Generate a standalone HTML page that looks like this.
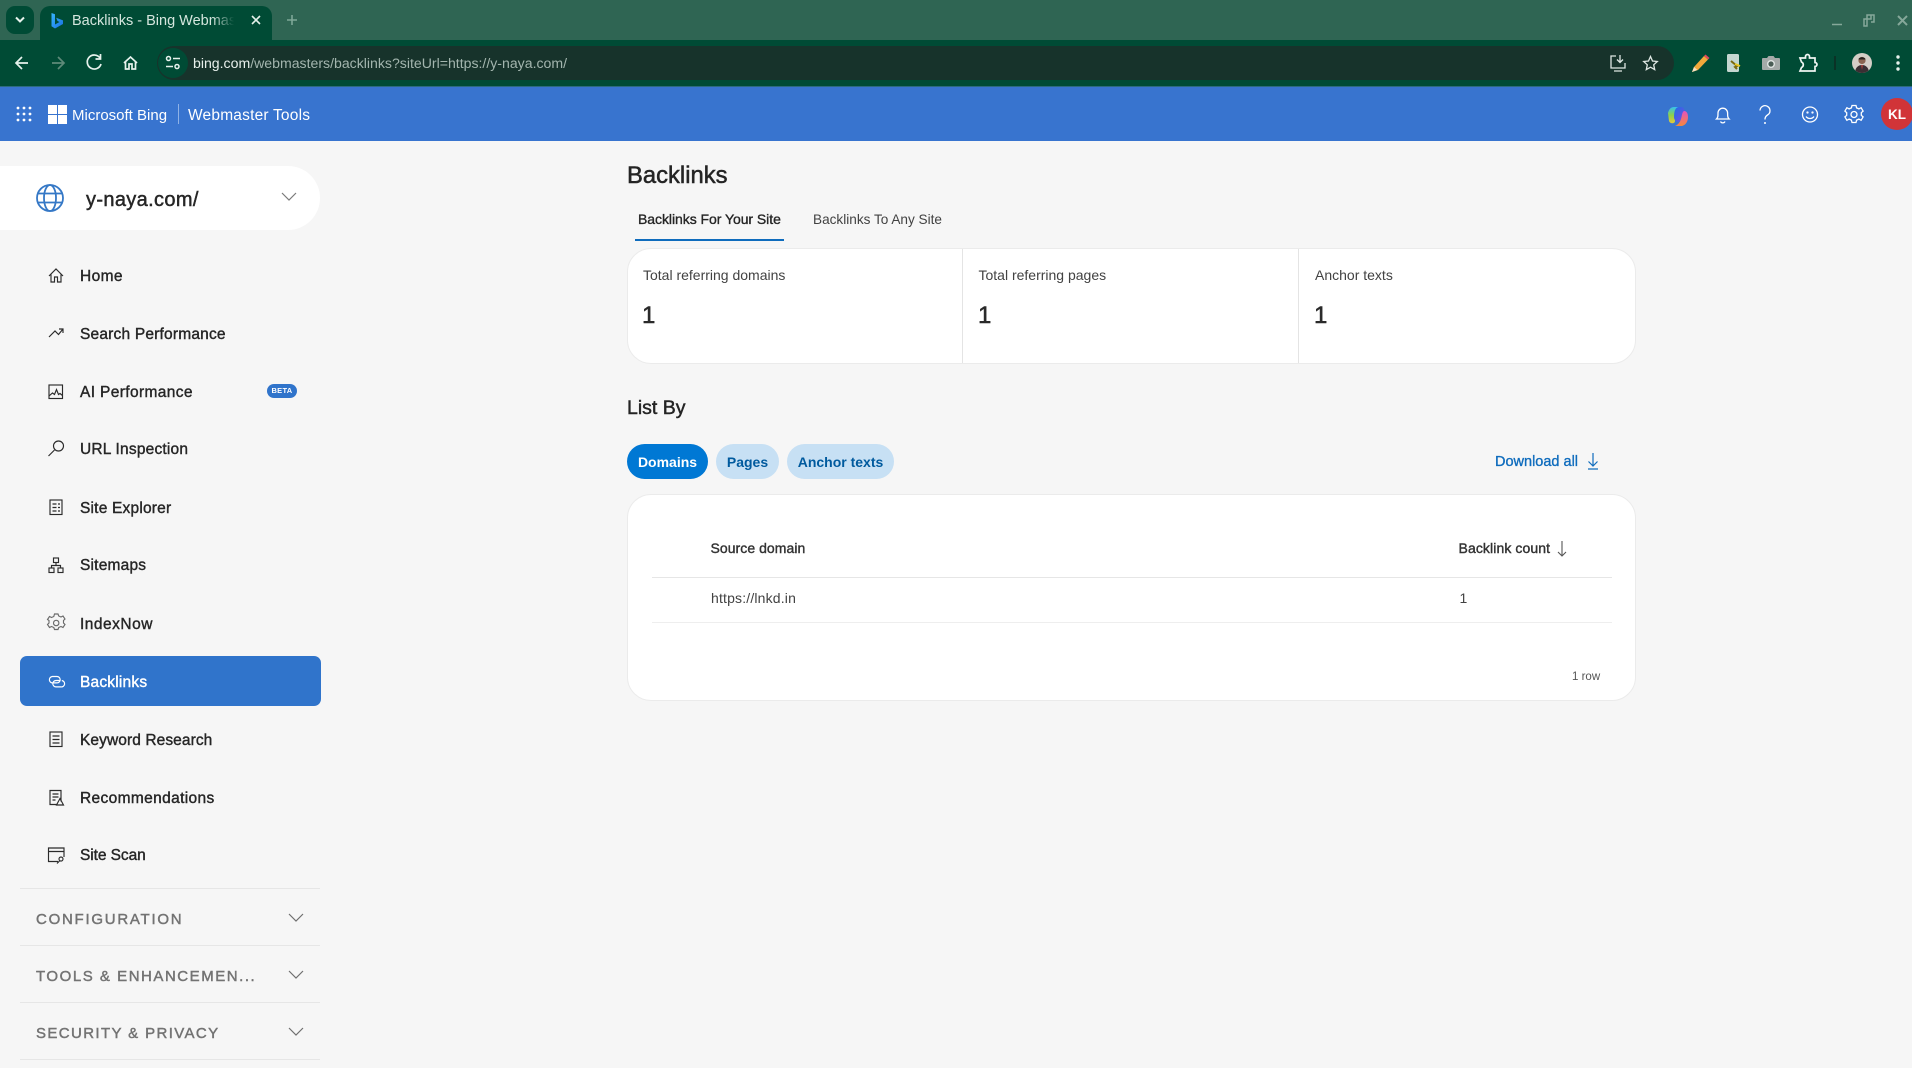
<!DOCTYPE html>
<html lang="en"><head><meta charset="utf-8"><title>Backlinks - Bing Webmaster Tools</title>
<style>
html,body{margin:0;padding:0;width:1912px;height:1068px;overflow:hidden;background:#f6f6f6;font-family:"Liberation Sans",sans-serif;color:#242424}
.a{position:absolute}
.t{position:absolute;white-space:nowrap;line-height:20px;height:20px}
svg{position:absolute;overflow:visible;fill:none}
.nav{font-size:15.5px;color:#262626;left:80px;-webkit-text-stroke:.4px #262626;letter-spacing:.2px}
.sec{font-size:15px;color:#737373;left:36px;letter-spacing:1.65px;-webkit-text-stroke:.45px #737373}
.div{position:absolute;left:20px;width:300px;height:1px;background:#e6e6e6}
.card{position:absolute;background:#fff;border:1px solid #ebebeb;border-radius:24px;box-sizing:border-box}
.pill{position:absolute;top:444px;height:35px;border-radius:17.5px;background:#c7e0f4;color:#005a9e;font-size:14px;font-weight:bold;line-height:37px;text-align:center}
</style></head><body>

<!-- browser chrome -->
<div class="a" style="left:0;top:0;width:1912px;height:40px;background:#2f6553"></div>
<div class="a" style="left:0;top:40px;width:1912px;height:46px;background:#004b35"></div>
<div class="a" style="left:0;top:86px;width:1912px;height:1px;background:#2d6a7e"></div>
<div class="a" style="left:6px;top:6px;width:28px;height:28px;border-radius:9px;background:#004b35"></div>
<svg style="left:0;top:0" width="60" height="40"><path d="M16 17.500l4 4 4-4" stroke="#e6f2ec" stroke-width="2"/></svg>
<div class="a" style="left:40px;top:6px;width:232px;height:34px;background:#004b35;border-radius:10px 10px 0 0"></div>
<svg style="left:50px;top:12px" width="14" height="18"><defs><linearGradient id="bf" x1="0" y1="0" x2="1" y2="1"><stop offset="0" stop-color="#37b6ff"/><stop offset="1" stop-color="#1a6fe0"/></linearGradient></defs><path d="M1.500 1l3.500 1.200v10.300l4.500-2.500-2-1-1.300-3.200 6.800 2.600v3.600L5 16.500l-3.500-2.200z" fill="url(#bf)"/></svg>
<div class="t" style="left:72px;top:10.500px;font-size:14.5px;color:#d5e6de;width:165px;overflow:hidden">Backlinks - Bing Webmas</div>
<div class="a" style="left:212px;top:8px;width:26px;height:28px;background:linear-gradient(90deg,rgba(0,75,53,0),#004b35 85%)"></div>
<svg style="left:250px;top:14px" width="12" height="12"><path d="M2 2l8 8M10 2l-8 8" stroke="#e6f2ec" stroke-width="1.600"/></svg>
<svg style="left:286px;top:14px" width="12" height="12"><path d="M6 1v10M1 6h10" stroke="#7fa898" stroke-width="1.600"/></svg>
<svg style="left:1825px;top:10px" width="85" height="20"><path d="M7 14.500h10" stroke="#86a89a" stroke-width="1.500"/><path d="M39 9h7v-4h-4v11h-3zM42 5h7v7h-3" stroke="#86a89a" stroke-width="1.500"/><path d="M73 6l9 9M82 6l-9 9" stroke="#86a89a" stroke-width="2"/></svg>

<svg style="left:0;top:40px" width="160" height="46"><g stroke="#e6f2ec" stroke-width="1.700"><path d="M28 23H17M22 17l-6 6 6 6"/><path d="M52 23h11M58 17l6 6-6 6" stroke="#5e8a79"/><path d="M100 18a7 7 0 1 0 1 6M100.500 14v5h-5"/><path d="M124 23l6.500-6 6.500 6M125.500 22v7h3.500v-5h3v5h3.500v-7"/></g></svg>
<div class="a" style="left:157px;top:46px;width:1517px;height:34px;border-radius:17px;background:#17332b"></div>
<div class="a" style="left:158px;top:48px;width:30px;height:30px;border-radius:15px;background:#004b35"></div>
<svg style="left:164px;top:55px" width="18" height="16"><g stroke="#e6f2ec" stroke-width="1.500"><circle cx="4.500" cy="3.500" r="2"/><path d="M9 3.500h7M2 11.500h7"/><circle cx="13" cy="11.500" r="2"/></g></svg>
<div class="t" style="left:193px;top:53px;font-size:14.1px;color:#e8f0ec">bing.com<span style="color:#a3b5ae">/webmasters/backlinks?siteUrl=https://y-naya.com/</span></div>
<svg style="left:1608px;top:53px" width="60" height="20"><g stroke="#dfe8e4" stroke-width="1.300"><path d="M8 3H3v12h14v-5M6 18h8M12 2v7M9 6.500l3 3 3-3"/><path d="M42.500 3.500l2 4.500 4.800.500-3.600 3.300 1 4.800-4.200-2.400-4.200 2.400 1-4.800-3.600-3.300 4.800-.500z"/></g></svg>
<svg style="left:1689px;top:53px" width="220" height="22"><path d="M3 19l2-5L15 3l4 3.500L9 17z" fill="#f2a93b"/><path d="M15 3l1.500-1.500 4 3.500L19 6.500z" fill="#e2495b"/><path d="M3 19l2-5 3.500 3z" fill="#f7e2c2"/>
<rect x="38" y="1" width="12" height="18" rx="1.500" fill="#c4d6d0"/><path d="M42 8l6 5-2 1 2 2" stroke="#7a6a10" stroke-width="2"/><path d="M46 11l5 2" stroke="#e8c620" stroke-width="2"/>
<path d="M74 5h4l1.500-2h5l1.500 2h4a1 1 0 0 1 1 1v10a1 1 0 0 1-1 1H74a1 1 0 0 1-1-1V6a1 1 0 0 1 1-1z" fill="#a4aaa8"/><circle cx="82" cy="11" r="3.300" fill="#4a5e56" stroke="#dfe4e2" stroke-width="1.400"/>
<path d="M111 5h5.500v-1.500a2 2 0 0 1 4 0V5H126v4.500a2 2 0 0 1 0 4V18h-15l1.500-3.500a3 3 0 0 0 0-5.500z" stroke="#f0f5f2" stroke-width="1.700"/>
<path d="M146 3v14" stroke="#0e2a22" stroke-width="1.500"/>
<circle cx="209" cy="4" r="1.700" fill="#e6f2ec"/><circle cx="209" cy="10" r="1.700" fill="#e6f2ec"/><circle cx="209" cy="16" r="1.700" fill="#e6f2ec"/></svg>
<svg style="left:1852px;top:53px" width="20" height="20"><defs><clipPath id="av"><circle cx="10" cy="10" r="10"/></clipPath></defs><g clip-path="url(#av)"><rect width="20" height="20" fill="#d3cec6"/><path d="M3 20c0-5 3-8 7-8s7 3 7 8z" fill="#3a2f33"/><circle cx="10" cy="7.500" r="3.600" fill="#8a6450"/><path d="M6.500 6.500c0-3 7-3 7 0z" fill="#2a211e"/><path d="M9 12l1 5 1-5z" fill="#a8423c"/></g></svg>

<!-- blue header -->
<div class="a" style="left:0;top:87px;width:1912px;height:54px;background:#3874cf"></div>
<svg style="left:16px;top:106px" width="16" height="16"><g fill="#fff"><circle cx="2" cy="2" r="1.400"/><circle cx="8" cy="2" r="1.400"/><circle cx="14" cy="2" r="1.400"/><circle cx="2" cy="8" r="1.400"/><circle cx="8" cy="8" r="1.400"/><circle cx="14" cy="8" r="1.400"/><circle cx="2" cy="14" r="1.400"/><circle cx="8" cy="14" r="1.400"/><circle cx="14" cy="14" r="1.400"/></g></svg>
<svg style="left:48px;top:105px" width="19" height="19"><g fill="#fff"><rect width="9" height="9"/><rect x="10" width="9" height="9"/><rect y="10" width="9" height="9"/><rect x="10" y="10" width="9" height="9"/></g></svg>
<div class="t" style="left:72px;top:106px;font-size:15px;color:#fff">Microsoft Bing</div>
<div class="a" style="left:178px;top:104px;width:1px;height:20px;background:#8fb2e6"></div>
<div class="t" style="left:188px;top:106px;font-size:15.5px;color:#fff;letter-spacing:.2px">Webmaster Tools</div>
<svg style="left:1667px;top:105px" width="22" height="22"><defs><linearGradient id="c1" x1="0" y1="0" x2="0" y2="1"><stop offset="0" stop-color="#35c1f1"/><stop offset=".5" stop-color="#8ed04a"/><stop offset="1" stop-color="#e8c83a"/></linearGradient><linearGradient id="c2" x1="0" y1="0" x2="1" y2="1"><stop offset="0" stop-color="#1b6fe8"/><stop offset="1" stop-color="#7c4ae0"/></linearGradient><linearGradient id="c3" x1="0" y1="0" x2="0" y2="1"><stop offset="0" stop-color="#e452c0"/><stop offset="1" stop-color="#f6883a"/></linearGradient></defs><path d="M1 8c1-4 3-6 6-6h5c-3 1-4 4-4 8v6c0 3-5 3-6 0z" fill="url(#c1)"/><path d="M7 12c0-5 1-10 5-10h2c3 0 4 4 4 7l-6 8c-3 0-5-2-5-5z" fill="url(#c2)"/><path d="M17 6c3 0 4 3 4 6 0 5-3 9-7 9H8c3-1 5-4 6-7s1-7 3-8z" fill="url(#c3)"/></svg>
<svg style="left:1712px;top:102px" width="170" height="26"><g stroke="#fff" stroke-width="1.300"><path d="M4.500 17c1.500-1.500 1.500-3 1.500-6a4.800 4.800 0 0 1 9.600 0c0 3 0 4.500 1.500 6zM8.500 19.500a2.500 2.500 0 0 0 4.500 0"/><path d="M48 8.500a5 5 0 1 1 7.500 4.500c-2 1.200-2.500 2.500-2.500 4.500"/><circle cx="98" cy="12.500" r="7.500"/><path d="M94 14.500a5 5 0 0 0 8 0"/><circle cx="95.500" cy="10.500" r=".5"/><circle cx="100.500" cy="10.500" r=".5"/><circle cx="142" cy="12.500" r="3"/><path d="M140 3.500h4l.6 2.400 2.300 1 2.200-1.200 2 3.400-1.800 1.600v2.600l1.800 1.600-2 3.400-2.200-1.200-2.300 1-.6 2.400h-4l-.6-2.400-2.300-1-2.200 1.200-2-3.400 1.800-1.600v-2.600l-1.800-1.600 2-3.400 2.200 1.200 2.300-1z"/></g><circle cx="53" cy="21" r="1" fill="#fff"/></svg>
<div class="a" style="left:1881px;top:98px;width:32px;height:32px;border-radius:50%;background:#d13438;color:#fff;font-size:13.5px;font-weight:bold;line-height:34px;text-align:center">KL</div>

<!-- sidebar -->
<div class="a" style="left:-40px;top:166px;width:360px;height:64px;border-radius:32px;background:#fff"></div>
<svg style="left:36px;top:184px" width="28" height="28"><g stroke="#3578c6" stroke-width="1.800"><circle cx="14" cy="14" r="13"/><ellipse cx="14" cy="14" rx="6" ry="13"/><path d="M2 9.500h24M2 18.500h24"/></g></svg>
<div class="t" style="left:86px;top:190px;font-size:20px;letter-spacing:.35px;color:#262626;-webkit-text-stroke:.45px #262626">y-naya.com/</div>
<svg style="left:281px;top:192px" width="16" height="10"><path d="M1 1l7 7 7-7" stroke="#7a7a7a" stroke-width="1.200"/></svg>

<div class="a" style="left:20px;top:656px;width:301px;height:49.500px;border-radius:7px;background:#3074cb"></div>
<svg style="left:47px;top:265px" width="22" height="600"><g stroke="#2b2b2b" stroke-width="1.150">
<path d="M2 11l7-7 7 7M4 9.500v7.500h3.500v-5h3v5H14V9.500"/>
<path d="M2 72l6-6 3.500 3.500L16 64M12 64h4v4"/>
<rect x="2" y="120" width="13.500" height="13.500"/><path d="M2 131l3.500-3 2 1.500 2-5 2 5 1.500-1 2.500 2"/>
<circle cx="11.500" cy="181" r="5"/><path d="M7.500 185l-6 6"/>
<rect x="3" y="235" width="12" height="14.500"/><path d="M5.500 239h4M11 239h2M5.500 242.500h4M11 242.500h2M5.500 246h4M11 246h2"/>
<rect x="6.500" y="293" width="5" height="4.500"/><rect x="2" y="303" width="5" height="4.500"/><rect x="11" y="303" width="5" height="4.500"/><path d="M9 297.500v3M4.500 303v-2.500h9v2.500"/>
<g stroke="#6b6b6b" transform="translate(0,-2)"><path d="M7.500 351h3.500l.7 2 2.300 1 2-1 2 3-1.500 1.500v2.500l1.500 1.500-2 3-2-1-2.300 1-.7 2H7.500l-.7-2-2.300-1-2 1-2-3 1.500-1.500v-2.500L.5 356.500l2-3 2 1 2.300-1z"/><circle cx="9.200" cy="360" r="2.700"/></g>
<g transform="translate(0,2)"><rect x="3" y="465" width="12" height="14.500"/><path d="M5.500 469h7M5.500 472.500h7M5.500 476h7"/></g>
<g transform="translate(0,1.500)"><path d="M14 535v-11H3v14h7M5.500 527.500h6M5.500 530.500h6M5.500 533.500h3"/><path d="M13 532l3.500 6.500h-7z"/></g>
<path d="M17 592v-9H1.500v13.500H11M1.500 586.500H17M10 598.500l2.500-2.500"/><circle cx="14" cy="594" r="2"/>
</g><g stroke="#fff" stroke-width="1.200" transform="translate(0,7.500)"><path d="M5 404h5a3.200 3.200 0 0 1 0 6.400H6a3.200 3.200 0 0 1-.8-6.400"/><path d="M13 408h-4a3.200 3.200 0 0 0 0 6.400h5a3.200 3.200 0 0 0 .8-6.400"/></g></svg>

<div class="t nav" style="top:266.500px;letter-spacing:.4px">Home</div>
<div class="t nav" style="top:324.500px">Search Performance</div>
<div class="t nav" style="top:382.500px;letter-spacing:.37px">AI Performance</div>
<div class="t nav" style="top:440px">URL Inspection</div>
<div class="t nav" style="top:498.500px">Site Explorer</div>
<div class="t nav" style="top:556px">Sitemaps</div>
<div class="t nav" style="top:614.500px;letter-spacing:.5px">IndexNow</div>
<div class="t nav" style="top:672.500px;color:#fff;-webkit-text-stroke:.4px #fff">Backlinks</div>
<div class="t nav" style="top:730.500px;letter-spacing:.09px">Keyword Research</div>
<div class="t nav" style="top:788.500px;letter-spacing:.36px">Recommendations</div>
<div class="t nav" style="top:846px;letter-spacing:-.07px">Site Scan</div>
<div class="a" style="left:267px;top:384px;width:30px;height:14px;border-radius:7px;background:#3074cb;color:#fff;font-size:7.5px;font-weight:bold;line-height:14px;text-align:center;letter-spacing:.3px">BETA</div>

<div class="div" style="top:888px"></div><div class="div" style="top:945px"></div><div class="div" style="top:1002px"></div><div class="div" style="top:1059px"></div>
<div class="t sec" style="top:910px;letter-spacing:1.74px">CONFIGURATION</div>
<div class="t sec" style="top:967px;letter-spacing:1.53px">TOOLS &amp; ENHANCEMEN...</div>
<div class="t sec" style="top:1023.500px;letter-spacing:1.38px">SECURITY &amp; PRIVACY</div>
<svg style="left:288px;top:912.500px" width="16" height="130"><g stroke="#6f6f6f" stroke-width="1.200"><path d="M1 1l7 7 7-7M1 58l7 7 7-7M1 115l7 7 7-7"/></g></svg>

<!-- main -->
<div class="t" style="left:627px;top:166px;font-size:23.8px;color:#242424;-webkit-text-stroke:.5px #242424">Backlinks</div>
<div class="t" style="left:638px;top:209px;font-size:14px;letter-spacing:-.05px;color:#242424;-webkit-text-stroke:.35px #242424">Backlinks For Your Site</div>
<div class="t" style="left:813px;top:210px;font-size:13.6px;color:#424242">Backlinks To Any Site</div>
<div class="a" style="left:635px;top:239px;width:149px;height:2px;background:#0f6cbd"></div>

<div class="card" style="left:627px;top:248px;width:1009px;height:116px"></div>
<div class="a" style="left:962px;top:249px;width:1px;height:114px;background:#e4e4e4"></div>
<div class="a" style="left:1298px;top:249px;width:1px;height:114px;background:#e4e4e4"></div>
<div class="t" style="left:643px;top:265px;font-size:14px;color:#424242">Total referring domains</div>
<div class="t" style="left:978.500px;top:265px;font-size:14px;color:#424242">Total referring pages</div>
<div class="t" style="left:1315px;top:265px;font-size:14px;color:#424242">Anchor texts</div>
<div class="t" style="left:642px;top:306px;font-size:24px;color:#2a2a2a;-webkit-text-stroke:.5px #2a2a2a">1</div>
<div class="t" style="left:978px;top:306px;font-size:24px;color:#2a2a2a;-webkit-text-stroke:.5px #2a2a2a">1</div>
<div class="t" style="left:1314px;top:306px;font-size:24px;color:#2a2a2a;-webkit-text-stroke:.5px #2a2a2a">1</div>

<div class="t" style="left:627px;top:398px;font-size:19.5px;color:#242424;-webkit-text-stroke:.45px #242424">List By</div>
<div class="pill" style="left:627px;width:81px;background:#0078d4;color:#fff">Domains</div>
<div class="pill" style="left:716px;width:63px">Pages</div>
<div class="pill" style="left:787px;width:107px">Anchor texts</div>
<div class="t" style="left:1495px;top:452px;font-size:14.5px;color:#0f6cbd;-webkit-text-stroke:.35px #0f6cbd">Download all</div>
<svg style="left:1587px;top:452px" width="12" height="18"><path d="M6 1v13M1.500 9.500L6 14l4.500-4.500M1 17h10" stroke="#0f6cbd" stroke-width="1.200"/></svg>

<div class="card" style="left:627px;top:494px;width:1009px;height:207px"></div>
<div class="t" style="left:710.5px;top:538px;font-size:14px;letter-spacing:.05px;color:#333;-webkit-text-stroke:.4px #333">Source domain</div>
<div class="t" style="left:1458.5px;top:538px;font-size:14px;letter-spacing:.1px;color:#333;-webkit-text-stroke:.4px #333">Backlink count</div>
<svg style="left:1557px;top:540px" width="10" height="18"><path d="M5 1v15M1 12l4 4 4-4" stroke="#555" stroke-width="1.100"/></svg>
<div class="a" style="left:652px;top:577px;width:960px;height:1px;background:#e6e6e6"></div>
<div class="t" style="left:711px;top:588px;font-size:14px;letter-spacing:.17px;color:#424242">https://lnkd.in</div>
<div class="t" style="left:1459.500px;top:588px;font-size:14px;color:#424242">1</div>
<div class="a" style="left:652px;top:622px;width:960px;height:1px;background:#eee"></div>
<div class="t" style="left:1572px;top:666.500px;font-size:11.5px;color:#555">1 row</div>
</body></html>
